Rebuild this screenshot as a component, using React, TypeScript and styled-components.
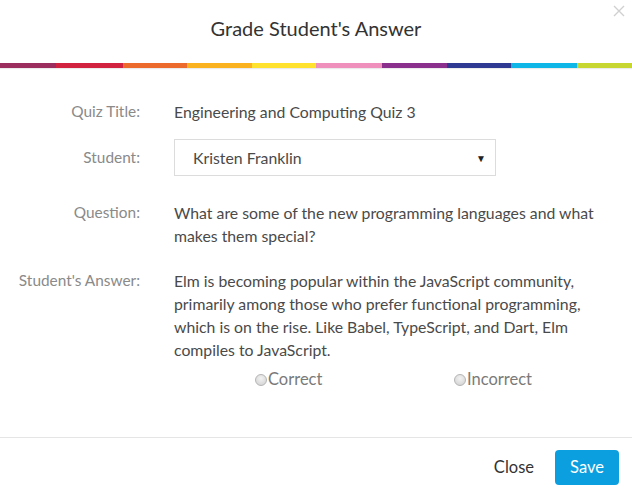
import React from "react";
import styled, { createGlobalStyle } from "styled-components";

const Global = createGlobalStyle`
  html, body { margin: 0; padding: 0; background: #fff; }
  body { font-family: Lato, "Open Sans", sans-serif; }
  * { box-sizing: border-box; }
`;

const Modal = styled.div`
  width: 632px;
  height: 490px;
  background: #fff;
  display: flex;
  flex-direction: column;
  position: relative;
`;

const Header = styled.header`
  height: 63px;
  display: flex;
  align-items: center;
  justify-content: center;
  padding-bottom: 7px;
`;

const Title = styled.h1`
  margin: 0;
  font-family: Lato, sans-serif;
  font-weight: 400;
  font-size: 20px;
  color: #333;
`;

const CloseX = styled.button`
  position: absolute;
  top: 5px;
  right: 7px;
  border: 0;
  background: none;
  padding: 0;
  width: 12px;
  height: 12px;
  display: flex;
  cursor: pointer;
`;

const Rainbow = styled.div`
  display: flex;
  height: 5px;
  box-shadow: 0 1px 1px rgba(0, 0, 0, 0.08);
`;

const Stripe = styled.div<{ $c: string; $w: number }>`
  background: ${(p) => p.$c};
  flex: ${(p) => p.$w} 0 0;
`;

const Body = styled.div`
  flex: 1;
  padding: 32px 26px 0 0;
`;

const Row = styled.div<{ $mb: number; $center?: boolean }>`
  display: grid;
  grid-template-columns: 140px 1fr;
  column-gap: 34px;
  align-items: ${(p) => (p.$center ? "center" : "start")};
  margin-bottom: ${(p) => p.$mb}px;
`;

const Label = styled.div`
  text-align: right;
  font-size: 15.4px;
  line-height: 23px;
  color: #8a8a8a;
`;

const Value = styled.div`
  font-size: 15.8px;
  line-height: 23px;
  color: #4a4a4a;
`;

const Select = styled.div`
  width: 322px;
  height: 37px;
  border: 1px solid #dcdcdc;
  display: flex;
  align-items: center;
  justify-content: space-between;
  padding: 0 9px 0 18px;
  font-size: 15.8px;
  color: #4a4a4a;
`;

const Arrow = styled.span`
  font-size: 10px;
  color: #222;
  margin-top: 1px;
`;

const RadioRow = styled.div`
  display: grid;
  grid-template-columns: 199px auto;
  padding-left: 255px;
  margin-top: 7px;
`;

const RadioLabel = styled.label`
  display: flex;
  align-items: center;
  font-size: 16.5px;
  line-height: 23px;
  color: #7a7a7a;
`;

const RadioDot = styled.span`
  width: 12px;
  height: 12px;
  border-radius: 50%;
  border: 1px solid #b5b5b5;
  background: radial-gradient(circle at 50% 35%, #f2f2f2, #cfcfcf);
  margin-right: 1px;
`;

const Footer = styled.footer`
  height: 53px;
  border-top: 1px solid #e5e5e5;
  display: flex;
  align-items: center;
  justify-content: flex-end;
  gap: 21px;
  padding: 6px 13px 0 0;
`;

const TextButton = styled.button`
  border: 0;
  background: none;
  font-family: Lato, sans-serif;
  font-size: 16.5px;
  color: #333;
  padding: 0;
`;

const PrimaryButton = styled.button`
  width: 64px;
  height: 35px;
  border: 0;
  border-radius: 4px;
  background: #0b9fe0;
  color: #fff;
  font-family: Lato, sans-serif;
  font-size: 16.5px;
`;

const stripes: [string, number][] = [
  ["#9a2c5e", 56],
  ["#d1233f", 67],
  ["#ec6a2b", 64],
  ["#fbb21f", 65],
  ["#fee22d", 64],
  ["#ef8fbc", 66],
  ["#8a2f8b", 65],
  ["#2e3a91", 64],
  ["#0db6e6", 66],
  ["#c8d631", 55],
];

export default function App() {
  return (
    <Modal>
      <Global />
      <CloseX aria-label="close">
        <svg width="12" height="12" viewBox="0 0 12 12">
          <path d="M1 1 L11 11 M11 1 L1 11" stroke="#d0d0d0" strokeWidth="1.4" />
        </svg>
      </CloseX>
      <Header>
        <Title>Grade Student's Answer</Title>
      </Header>
      <Rainbow>
        {stripes.map(([c, w]) => (
          <Stripe key={c} $c={c} $w={w} />
        ))}
      </Rainbow>
      <Body>
        <Row $mb={16}>
          <Label>Quiz Title:</Label>
          <Value>Engineering and Computing Quiz 3</Value>
        </Row>
        <Row $mb={25} $center>
          <Label>Student:</Label>
          <Select>
            <span>Kristen Franklin</span>
            <Arrow>▼</Arrow>
          </Select>
        </Row>
        <Row $mb={22}>
          <Label>Question:</Label>
          <Value>What are some of the new programming languages and what makes them special?</Value>
        </Row>
        <Row $mb={0}>
          <Label>Student's Answer:</Label>
          <Value>
            Elm is becoming popular within the JavaScript community, primarily among those who prefer
            functional programming, which is on the rise. Like Babel, TypeScript, and Dart, Elm
            compiles to JavaScript.
          </Value>
        </Row>
        <RadioRow>
          <RadioLabel>
            <RadioDot />
            Correct
          </RadioLabel>
          <RadioLabel>
            <RadioDot />
            Incorrect
          </RadioLabel>
        </RadioRow>
      </Body>
      <Footer>
        <TextButton>Close</TextButton>
        <PrimaryButton>Save</PrimaryButton>
      </Footer>
    </Modal>
  );
}
